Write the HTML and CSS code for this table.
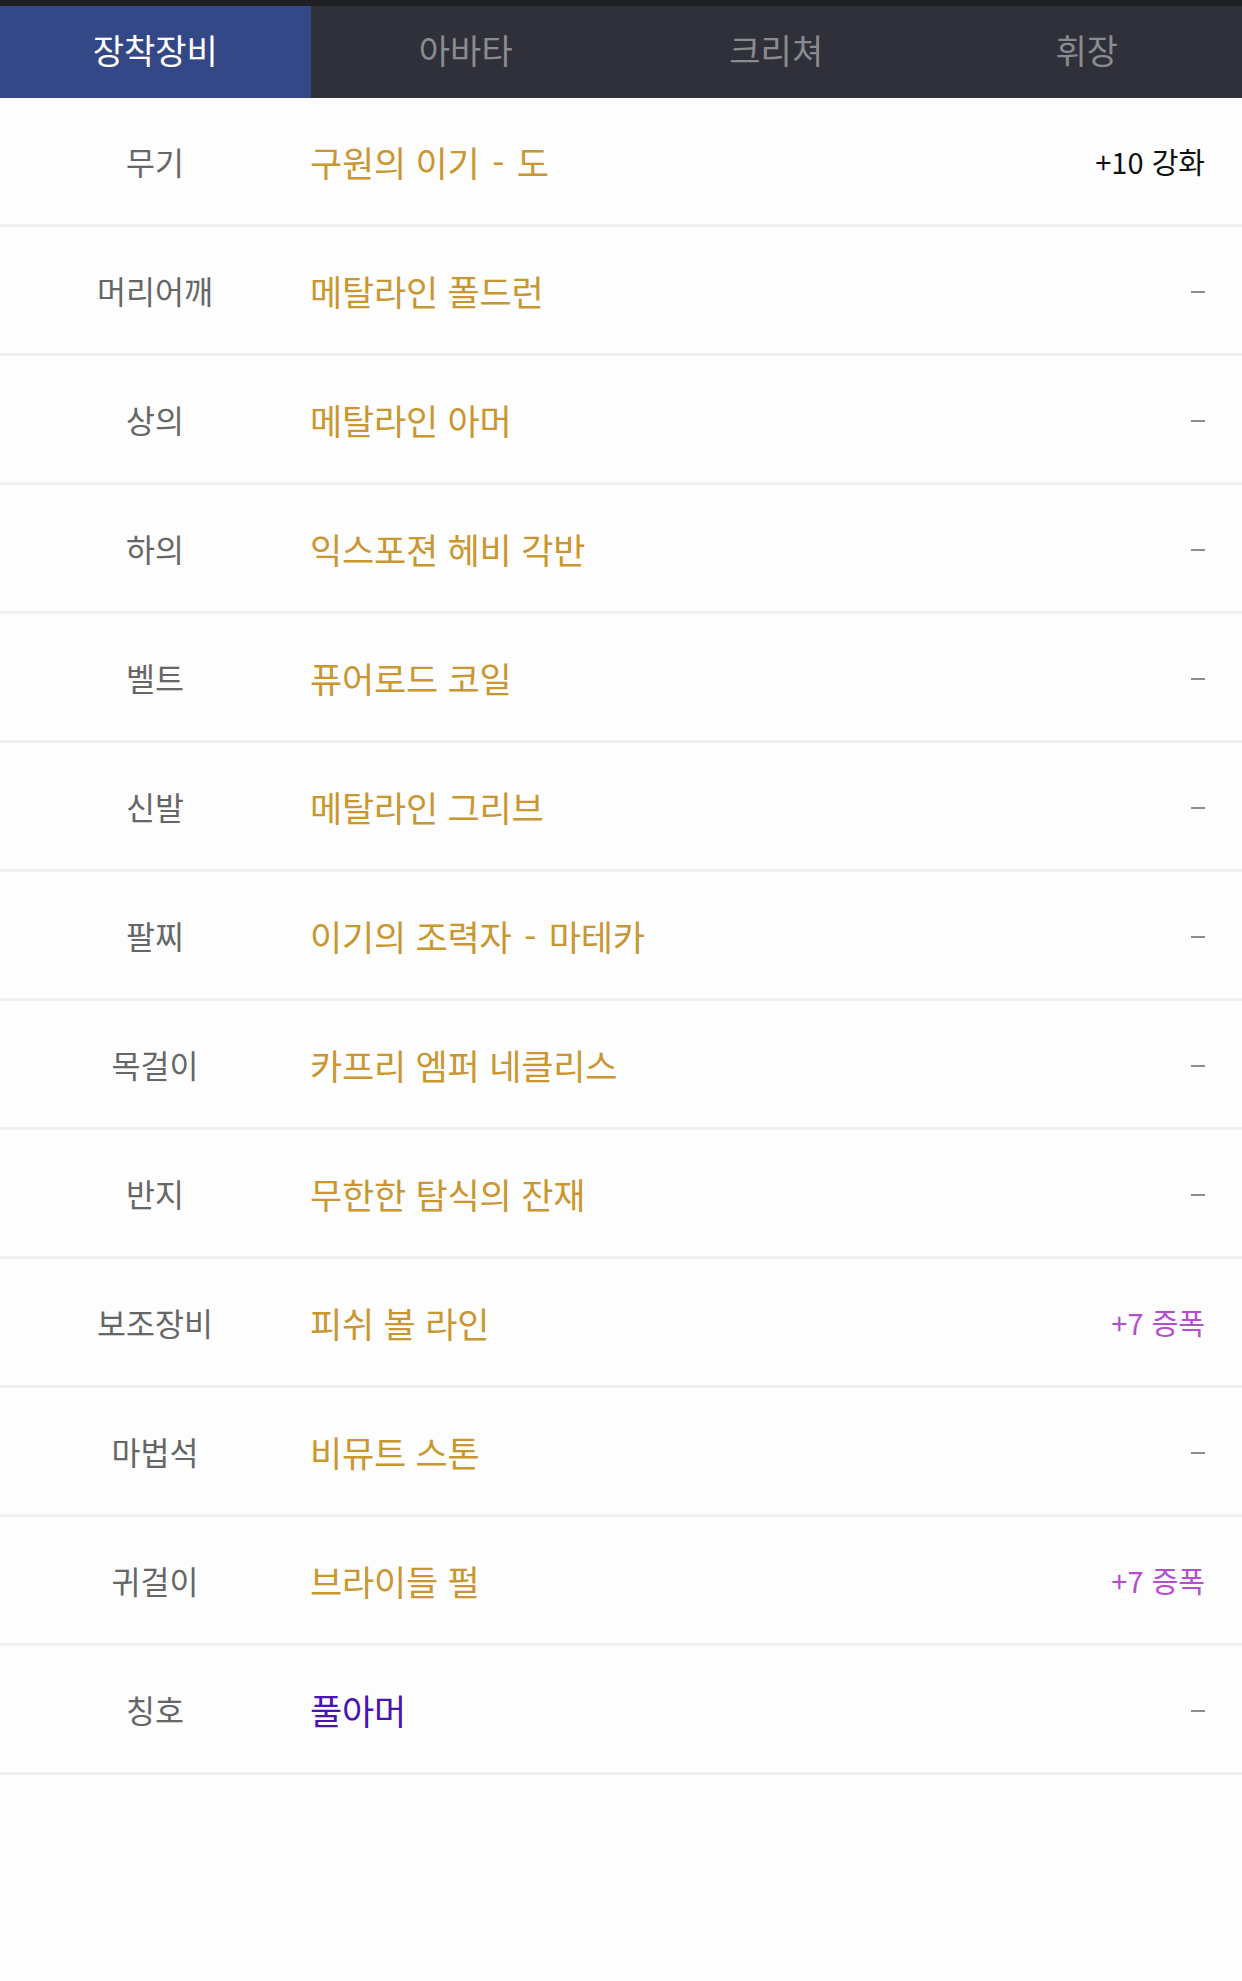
FILE: index.html
```html
<!DOCTYPE html>
<html lang="ko">

<head>
    <meta charset="UTF-8">
    <title>장착장비</title>
    <link rel="stylesheet" href="styles.css">
</head>

<body>
    <div class="top-strip"></div>
    <nav class="tabs">
        <button class="tab valgt">장착장비</button>
        <button class="tab">아바타</button>
        <button class="tab">크리쳐</button>
        <button class="tab">휘장</button>
    </nav>

    <section class="udstyr">
        <div class="raekke">
            <span class="slot">무기</span>
            <span class="navn">구원의 이기 <span class="bind">-</span> 도</span>
            <span class="ekstra sort">+10 강화</span>
        </div>
        <div class="raekke">
            <span class="slot">머리어깨</span>
            <span class="navn">메탈라인 폴드런</span>
            <span class="ekstra streg"></span>
        </div>
        <div class="raekke">
            <span class="slot">상의</span>
            <span class="navn">메탈라인 아머</span>
            <span class="ekstra streg"></span>
        </div>
        <div class="raekke">
            <span class="slot">하의</span>
            <span class="navn">익스포젼 헤비 각반</span>
            <span class="ekstra streg"></span>
        </div>
        <div class="raekke">
            <span class="slot">벨트</span>
            <span class="navn">퓨어로드 코일</span>
            <span class="ekstra streg"></span>
        </div>
        <div class="raekke">
            <span class="slot">신발</span>
            <span class="navn">메탈라인 그리브</span>
            <span class="ekstra streg"></span>
        </div>
        <div class="raekke">
            <span class="slot">팔찌</span>
            <span class="navn">이기의 조력자 <span class="bind">-</span> 마테카</span>
            <span class="ekstra streg"></span>
        </div>
        <div class="raekke">
            <span class="slot">목걸이</span>
            <span class="navn">카프리 엠퍼 네클리스</span>
            <span class="ekstra streg"></span>
        </div>
        <div class="raekke">
            <span class="slot">반지</span>
            <span class="navn">무한한 탐식의 잔재</span>
            <span class="ekstra streg"></span>
        </div>
        <div class="raekke">
            <span class="slot">보조장비</span>
            <span class="navn">피쉬 볼 라인</span>
            <span class="ekstra lilla">+7 증폭</span>
        </div>
        <div class="raekke">
            <span class="slot">마법석</span>
            <span class="navn">비뮤트 스톤</span>
            <span class="ekstra streg"></span>
        </div>
        <div class="raekke">
            <span class="slot">귀걸이</span>
            <span class="navn">브라이들 펄</span>
            <span class="ekstra lilla">+7 증폭</span>
        </div>
        <div class="raekke">
            <span class="slot">칭호</span>
            <span class="navn titel">풀아머</span>
            <span class="ekstra streg"></span>
        </div>
    </section>
</body>

</html>
```

FILE: styles.css
```css
body {
    margin: 0;
    background: #fdfdfd;
    font-family: "Noto Sans CJK KR", "Noto Sans", sans-serif;
}

.top-strip {
    height: 6px;
    background: #1f2024;
}

.tabs {
    display: grid;
    grid-template-columns: repeat(4, 1fr);
    height: 92px;
    background: #2f3039;
}

.tab {
    border: 0;
    background: none;
    color: #8a8b90;
    font-family: inherit;
    font-size: 34px;
    padding: 0 0 5px;
}

.valgt {
    background: #344887;
    color: #ffffff;
}

.raekke {
    display: flex;
    align-items: center;
    height: 126px;
    border-bottom: 3px solid #efefef;
}

.slot {
    width: 310px;
    text-align: center;
    font-size: 31.5px;
    color: #666666;
}

.navn {
    flex: 1;
    font-size: 35px;
    color: #c9962f;
    letter-spacing: -0.2px;
}

.bind {
    margin: 0 3px;
}

.titel {
    color: #4a14b0;
}

.ekstra {
    padding-right: 37px;
    font-size: 29px;
}

.sort {
    color: #111111;
}

.lilla {
    color: #b54dd0;
}

.streg {
    width: 14px;
    height: 2px;
    margin-top: 4px;
    margin-right: 37px;
    padding-right: 0;
    background: #8c8c8c;
}
```
